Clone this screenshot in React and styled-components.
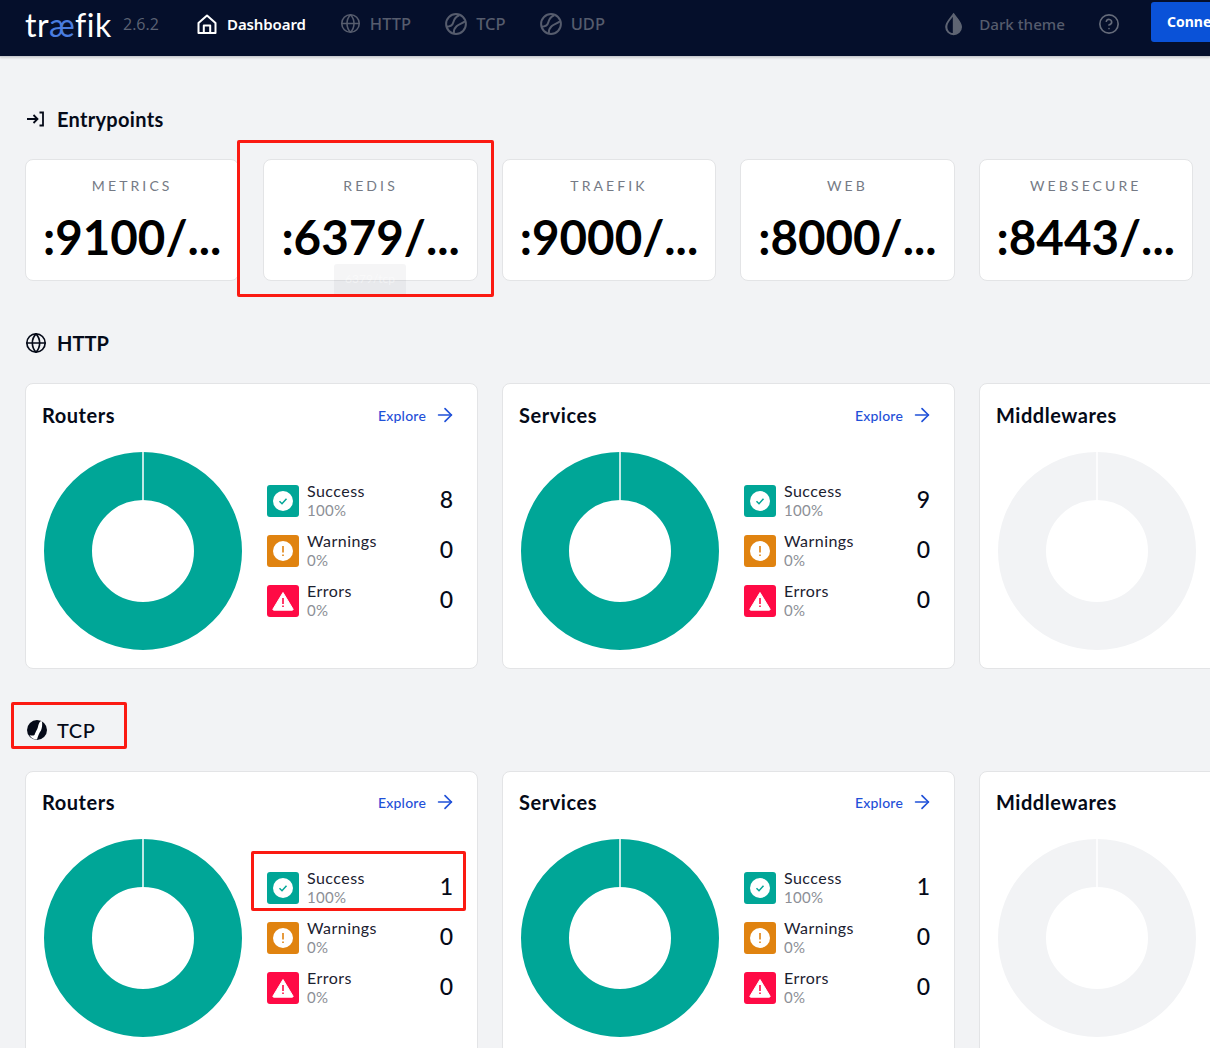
import React from 'react';
import styled, { createGlobalStyle } from 'styled-components';
import { ArrowRight, CircleHelp, Globe } from 'lucide-react';

const GlobalStyle = createGlobalStyle`
  html, body {
    margin: 0;
    height: 1048px;
    overflow: hidden;
    background: #f2f3f5;
    font-family: "Lato", "Open Sans", sans-serif;
    color: #03192d;
  }
`;

const Page = styled.div`
  position: relative;
  width: 1210px;
  height: 1048px;
  overflow: hidden;
`;

const Header = styled.header`
  display: flex;
  align-items: center;
  height: 57px;
  padding: 0 0 9px 25px;
  background: #050f2b;
  border-bottom: 1px solid #c9cbd0;
  box-sizing: border-box;
  box-shadow: 0 1px 2px rgba(0, 0, 0, 0.15);
  & > * {
    flex-shrink: 0;
  }
`;

const Logo = styled.div`
  width: 85px;
  font-size: 32px;
  font-weight: 400;
  line-height: 1;
  letter-spacing: 0.5px;
  color: #fff;
  white-space: nowrap;
  margin-top: 2px;
  span {
    color: #4a7de0;
  }
`;

const Version = styled.span`
  margin-left: 13px;
  width: 74px;
  font-family: "Open Sans", sans-serif;
  font-size: 16px;
  color: #5c6273;
`;

const Nav = styled.nav`
  display: flex;
  align-items: center;
  gap: 34px;
`;

const NavItem = styled.a`
  display: flex;
  align-items: center;
  gap: 9px;
  font-family: "Noto Sans", sans-serif;
  font-size: ${(p) => (p.$active ? 15 : 16.5)}px;
  font-weight: ${(p) => (p.$active ? 600 : 500)};
  letter-spacing: ${(p) => (p.$active ? '-0.1px' : '0')};
  color: ${(p) => (p.$active ? '#fff' : '#565c6d')};
  white-space: nowrap;
`;

const ThemeToggle = styled(NavItem)`
  width: 121px;
  margin-left: 339px;
  gap: 16px;
  font-size: 15.2px;
`;

const HelpIcon = styled(CircleHelp)`
  margin-left: 33px;
  color: #656b7a;
`;

const ConnectButton = styled.button`
  margin-left: 31px;
  margin-bottom: 4px;
  width: 59px;
  height: 40px;
  padding: 0 0 0 16px;
  overflow: hidden;
  text-align: left;
  border: 0;
  border-radius: 3px 0 0 3px;
  background: #0a52d8;
  color: #fff;
  font-family: "Noto Sans", sans-serif;
  font-size: 14px;
  font-weight: 700;
  white-space: nowrap;
`;

const Main = styled.main`
  padding: 0 0 0 25px;
`;

const SectionTitle = styled.h2`
  display: flex;
  align-items: center;
  gap: ${(p) => p.$gap || 10}px;
  height: 26px;
  margin: ${(p) => p.$top}px 0 0;
  padding-left: ${(p) => p.$indent || 0}px;
  font-size: 20px;
  font-weight: ${(p) => p.$weight || 700};
  line-height: 26px;
  letter-spacing: ${(p) => p.$spacing || 0}px;
  color: #050a18;
`;

const EntryRow = styled.div`
  display: grid;
  grid-template-columns: repeat(5, 214.4px);
  column-gap: 24px;
  margin-top: 27px;
`;

const EntryCard = styled.div`
  box-sizing: border-box;
  height: 122px;
  padding-top: 17px;
  border: 1px solid #e3e4e6;
  border-radius: 8px;
  background: #fff;
  text-align: center;
`;

const EntryName = styled.div`
  font-size: 14px;
  line-height: 17px;
  letter-spacing: 3.1px;
  color: #757a85;
`;

const EntryPort = styled.div`
  margin-top: 14px;
  font-size: 47.5px;
  font-weight: 700;
  line-height: 58px;
  color: #000;
  white-space: nowrap;
`;

const PanelRow = styled.div`
  display: grid;
  grid-template-columns: repeat(3, 453px);
  column-gap: 24px;
  margin-top: ${(p) => p.$top}px;
`;

const Panel = styled.section`
  box-sizing: border-box;
  height: 286px;
  padding: ${(p) => p.$top}px 16px 0;
  border: 1px solid #e3e4e6;
  border-radius: 8px;
  background: #fff;
`;

const PanelHead = styled.div`
  display: flex;
  align-items: center;
  justify-content: space-between;
  height: 24px;
`;

const PanelTitle = styled.h3`
  margin: 0;
  font-size: 20px;
  font-weight: 700;
  letter-spacing: 0.55px;
  color: #050a18;
`;

const Explore = styled.a`
  display: flex;
  align-items: center;
  gap: 8px;
  padding-right: 5px;
  font-size: 14px;
  font-weight: 500;
  letter-spacing: 0.2px;
  color: #1f50d8;
`;

const PanelBody = styled.div`
  display: flex;
  margin-top: 25px;
  margin-left: 2px;
`;

const Stats = styled.div`
  display: grid;
  row-gap: 18px;
  width: 186px;
  margin: 33px 0 0 25px;
  align-self: start;
`;

const StatRow = styled.div`
  display: flex;
  align-items: center;
  height: 32px;
`;

const StatBadge = styled.div`
  display: flex;
  align-items: center;
  justify-content: center;
  width: 32px;
  height: 32px;
  flex-shrink: 0;
  border-radius: 3px;
  background: ${(p) => p.$color};
`;

const StatText = styled.div`
  flex: 1;
  margin-left: 8px;
`;

const StatLabel = styled.div`
  font-size: 16px;
  line-height: 18px;
  letter-spacing: 0.45px;
  color: #1b2130;
`;

const StatPercent = styled.div`
  font-size: 15px;
  line-height: 20px;
  letter-spacing: 0.3px;
  color: #8c8f96;
`;

const StatValue = styled.div`
  margin-bottom: 4px;
  font-size: 23px;
  font-weight: 500;
  color: #050a18;
`;

const Callout = styled.div`
  position: absolute;
  left: ${(p) => p.$x}px;
  top: ${(p) => p.$y}px;
  width: ${(p) => p.$w}px;
  height: ${(p) => p.$h}px;
  box-sizing: border-box;
  border: 3px solid #fb1a12;
  border-radius: 2px;
`;

const Tooltip = styled.div`
  position: absolute;
  left: 334px;
  top: 264px;
  width: 72px;
  height: 33px;
  border-radius: 3px;
  background: rgba(60, 60, 70, 0.05);
  color: rgba(255, 255, 255, 0.45);
  font-size: 12px;
  line-height: 30px;
  text-align: center;
`;

const HomeIcon = () => (
  <svg width="20" height="20" viewBox="0 0 20 20" fill="none" stroke="#fff" strokeWidth="2" strokeLinejoin="round" style={{ marginRight: 1 }}>
    <path d="M10 1.500 18.500 9v10h-17V9z" />
    <path d="M6.800 19v-7.500h6.400V19" />
  </svg>
);

const CurveIcon = () => (
  <svg width="22" height="22" viewBox="0 0 20 20" fill="none" stroke="#565c6d" strokeWidth="1.800">
    <circle cx="10" cy="10" r="9" />
    <path d="M1.500 12.500c3.500 0 5.300-1 6-3.800.7-3 2.200-5.500 5.500-6.700" />
    <path d="M8 18.500c-.2-3 .6-4.800 2.500-6.500 2.500-2.200 5.500-2.500 7.700-4.500" />
  </svg>
);

const TcpTitleIcon = () => (
  <svg width="20" height="20" viewBox="0 0 20 20">
    <circle cx="10" cy="10" r="10" fill="#050a18" />
    <path d="M14 1C11 3 11.500 7 10 9.500 8.500 12 8 13.500 7.500 15 6 16 4 15.500 2.500 15 4 18 7 19.500 10 19.500c1-3.500 2-6.500 4-9 1-2.500 1.500-5.500 1-9z" fill="#fff" />
  </svg>
);

const DropIcon = () => (
  <svg width="20" height="24" viewBox="0 0 20 24">
    <path d="M10 1.500C7 6 2 10 2 15a8 8 0 0 0 16 0c0-5-5-9-8-13.500z" fill="#5e6473" stroke="#5e6473" strokeWidth="1.500" />
    <path d="M9.200 4.500C7 7.800 3.500 11 3.500 15c0 3.400 2.500 6 5.700 6.400z" fill="#050f2b" />
  </svg>
);

const EntryIcon = () => (
  <svg width="20" height="16" viewBox="0 0 20 16" fill="none" stroke="#050a18" strokeWidth="1.800">
    <path d="M2 8h10M8.500 4l4 4-4 4M14.500 1.500h3.500v13h-3.500" />
  </svg>
);

const CheckBadge = () => (
  <svg width="20" height="20" viewBox="0 0 20 20">
    <circle cx="10" cy="10" r="10" fill="#fff" />
    <path d="M6.500 10.300 9 12.700l4.500-5" fill="none" stroke="#00a697" strokeWidth="1.500" />
  </svg>
);

const WarnBadge = () => (
  <svg width="20" height="20" viewBox="0 0 20 20">
    <circle cx="10" cy="10" r="10" fill="#fff" />
    <path d="M10 5v6.500M10 13.500v1.500" fill="none" stroke="#e08310" strokeWidth="1.600" />
  </svg>
);

const ErrorBadge = () => (
  <svg width="22" height="20" viewBox="0 0 22 20">
    <path d="M11 1.500 21 18a.8.800 0 0 1-.7 1.200H1.700A.8.800 0 0 1 1 18z" fill="#fff" stroke="#fff" strokeLinejoin="round" />
    <path d="M11 7v6M11 14.500V16" fill="none" stroke="#ff0a45" strokeWidth="1.600" />
  </svg>
);

// donut with the little white gap at 12 o'clock
const Donut = ({ color }) => (
  <svg width="198" height="198" viewBox="0 0 198 198" style={{ flexShrink: 0 }}>
    <circle cx="99" cy="99" r="75" fill="none" stroke={color} strokeWidth="48" />
    <path d="M99 0v48" stroke="#fff" strokeWidth="1.500" />
  </svg>
);

const statRows = [
  { label: 'Success', percent: '100%', color: '#00a697', icon: <CheckBadge /> },
  { label: 'Warnings', percent: '0%', color: '#e08310', icon: <WarnBadge /> },
  { label: 'Errors', percent: '0%', color: '#ff0a45', icon: <ErrorBadge /> },
];

const StatsPanel = ({ title, success, top }) => (
  <Panel $top={top}>
    <PanelHead>
      <PanelTitle>{title}</PanelTitle>
      {success !== undefined && (
        <Explore>
          Explore <ArrowRight size={22} strokeWidth={1.8} />
        </Explore>
      )}
    </PanelHead>
    <PanelBody>
      <Donut color={success !== undefined ? '#00a697' : '#f2f3f5'} />
      {success !== undefined && (
        <Stats>
          {statRows.map((row, i) => (
            <StatRow key={row.label}>
              <StatBadge $color={row.color}>{row.icon}</StatBadge>
              <StatText>
                <StatLabel>{row.label}</StatLabel>
                <StatPercent>{row.percent}</StatPercent>
              </StatText>
              <StatValue>{i === 0 ? success : 0}</StatValue>
            </StatRow>
          ))}
        </Stats>
      )}
    </PanelBody>
  </Panel>
);

const entrypoints = [
  { name: 'METRICS', port: ':9100/...' },
  { name: 'REDIS', port: ':6379/...' },
  { name: 'TRAEFIK', port: ':9000/...' },
  { name: 'WEB', port: ':8000/...' },
  { name: 'WEBSECURE', port: ':8443/...' },
];

const App = () => (
  <Page>
    <GlobalStyle />
    <Header>
      <Logo>
        tr<span>æ</span>fik
      </Logo>
      <Version>2.6.2</Version>
      <Nav>
        <NavItem $active>
          <HomeIcon />
          Dashboard
        </NavItem>
        <NavItem>
          <Globe size={21} strokeWidth={1.8} />
          HTTP
        </NavItem>
        <NavItem>
          <CurveIcon />
          TCP
        </NavItem>
        <NavItem>
          <CurveIcon />
          UDP
        </NavItem>
      </Nav>
      <ThemeToggle>
        <DropIcon />
        Dark theme
      </ThemeToggle>
      <HelpIcon size={22} strokeWidth={1.8} />
      <ConnectButton>Connect</ConnectButton>
    </Header>
    <Main>
      <SectionTitle $top={49} $gap={12} $spacing={0.3}>
        <EntryIcon />
        Entrypoints
      </SectionTitle>
      <EntryRow>
        {entrypoints.map((e) => (
          <EntryCard key={e.name}>
            <EntryName>{e.name}</EntryName>
            <EntryPort>{e.port}</EntryPort>
          </EntryCard>
        ))}
      </EntryRow>
      <SectionTitle $top={49}>
        <Globe size={22} strokeWidth={1.8} color="#050a18" />
        HTTP
      </SectionTitle>
      <PanelRow $top={27}>
        <StatsPanel title="Routers" success={8} top={19} />
        <StatsPanel title="Services" success={9} top={19} />
        <StatsPanel title="Middlewares" top={19} />
      </PanelRow>
      <SectionTitle $top={48} $gap={10} $indent={2} $weight={500} $spacing={0.6}>
        <TcpTitleIcon />
        TCP
      </SectionTitle>
      <PanelRow $top={28}>
        <StatsPanel title="Routers" success={1} top={18} />
        <StatsPanel title="Services" success={1} top={18} />
        <StatsPanel title="Middlewares" top={18} />
      </PanelRow>
    </Main>
    <Tooltip>6379/tcp</Tooltip>
    <Callout $x={237} $y={140} $w={257} $h={157} />
    <Callout $x={11} $y={702} $w={116} $h={47} />
    <Callout $x={251} $y={851} $w={215} $h={60} />
  </Page>
);

export default App;
